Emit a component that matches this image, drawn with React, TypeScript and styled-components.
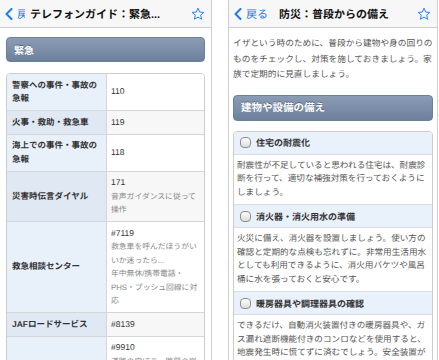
import {Fragment} from "react";
import styled, {createGlobalStyle} from "styled-components";

const GlobalStyle = createGlobalStyle`
  html, body {
    margin: 0;
    padding: 0;
    background: #ffffff;
  }

  body {
    font-family: "Liberation Sans", "Noto Sans CJK JP", sans-serif;
    color: #333333;
    text-rendering: geometricPrecision;
  }
`

const StyledPage = styled.div`
  display: flex;
  flex-direction: row;
  align-items: stretch;
  width: 439px;
  height: 360px;
  overflow: hidden;
  background: #ffffff;
`

const StyledScreen = styled.div<{ $left?: boolean }>`
  display: flex;
  flex-direction: column;
  flex-shrink: 0;
  width: ${props => props.$left ? "211px" : "208px"};
  margin-left: ${props => props.$left ? "0" : "16px"};
  border-right: 1px solid #cfcfcf;
  border-left: ${props => props.$left ? "none" : "1px solid #cfcfcf"};
  background: #ffffff;
  overflow: hidden;
`

const StyledNavBar = styled.div`
  display: flex;
  flex-direction: row;
  align-items: center;
  height: 27px;
  flex-shrink: 0;
  padding: 0 6px 0 5px;
  background: #f7f7f8;
  border-bottom: 1px solid #cdcdcd;

  svg {
    flex-shrink: 0;
  }
`

const StyledBack = styled.div<{ $clipped?: boolean }>`
  display: flex;
  align-items: center;
  gap: 4px;
  flex-shrink: 0;
  width: ${props => props.$clipped ? "20px" : "auto"};
  overflow: hidden;
  margin-right: ${props => props.$clipped ? "5px" : "11px"};
  color: #1a7cf4;
  font-size: 11px;
  white-space: nowrap;
`

const StyledTitle = styled.div`
  flex: 1;
  font-size: 11px;
  font-weight: bold;
  color: #111111;
  white-space: nowrap;
  overflow: hidden;
`

const StyledContent = styled.div`
  display: flex;
  flex-direction: column;
  padding: 9px 6px 0 6px;
`

const StyledSectionHeader = styled.div<{ $large?: boolean }>`
  display: flex;
  align-items: center;
  height: ${props => props.$large ? "24px" : "23px"};
  padding: 0 7px;
  border-radius: 4px;
  border: 1px solid #6c7f9b;
  background: linear-gradient(#8b9cb5, #6d809c);
  color: #ffffff;
  font-size: ${props => props.$large ? "10.5px" : "10px"};
  font-weight: bold;
  text-shadow: 0 -1px 0 rgba(40, 55, 80, 0.5);
`

const StyledTable = styled.div`
  display: grid;
  grid-template-columns: 100px 1fr;
  margin-top: 11px;
  border: 1px solid #cccccc;
  border-radius: 4px;
  overflow: hidden;
`

const StyledLabelCell = styled.div<{ $odd?: boolean; $first?: boolean }>`
  display: flex;
  align-items: center;
  padding: 4.5px 5px;
  font-size: 8.5px;
  line-height: 13.5px;
  font-weight: bold;
  color: #333333;
  background: ${props => props.$odd ? "#dfe8f3" : "#e8f0fa"};
  border-top: ${props => props.$first ? "none" : "1px solid #d6d6d6"};
  border-right: 1px solid #d6d6d6;
`

const StyledValueCell = styled.div<{ $odd?: boolean; $first?: boolean }>`
  display: flex;
  flex-direction: column;
  justify-content: center;
  padding: 4.5px 4px;
  font-size: 8.5px;
  line-height: 13.5px;
  color: #333333;
  background: ${props => props.$odd ? "#f7f7f7" : "#ffffff"};
  border-top: ${props => props.$first ? "none" : "1px solid #d6d6d6"};
`

const StyledNote = styled.div`
  font-size: 7.8px;
  color: #888888;
  white-space: nowrap;
`

const StyledIntro = styled.p`
  margin: 0;
  padding: 0;
  font-size: 8.7px;
  line-height: 15.5px;
  color: #555555;
  white-space: nowrap;
`

const StyledRightContent = styled.div`
  display: flex;
  flex-direction: column;
  padding: 8px 4px 0 4px;
  gap: 12px;
`

const StyledCard = styled.div`
  display: flex;
  flex-direction: column;
  border: 1px solid #cccccc;
  border-radius: 4px;
  overflow: hidden;
  margin-top: -2px;
`

const StyledCardHeader = styled.div<{ $first?: boolean }>`
  display: flex;
  align-items: center;
  gap: 5px;
  height: 22px;
  padding: 0 6px;
  background: #e9f1fb;
  border-top: ${props => props.$first ? "none" : "1px solid #d6dde6"};
  border-bottom: 1px solid #d6dde6;
  font-size: 9px;
  font-weight: bold;
  color: #333333;
`

const StyledCheck = styled.span`
  display: inline-block;
  width: 9px;
  height: 9px;
  border-radius: 4px;
  border: 1px solid #8d8d8d;
  background: linear-gradient(#ffffff, #dcdcdc);
  flex-shrink: 0;
`

const StyledCardBody = styled.div`
  padding: 4px 2px 5px 3px;
  font-size: 8.6px;
  line-height: 13.5px;
  color: #555555;
  white-space: nowrap;
`

const Chevron = () => (
    <svg width="8" height="12" viewBox="0 0 8 12">
        <polyline points="6.5,1 1.5,6 6.5,11" fill="none" stroke="#1a7cf4" strokeWidth="2"
                  strokeLinecap="round" strokeLinejoin="round"/>
    </svg>
)

const Star = () => (
    <svg width="14" height="14" viewBox="0 0 24 24">
        <polygon points="12,2 14.9,8.6 22,9.3 16.6,14 18.2,21 12,17.3 5.8,21 7.4,14 2,9.3 9.1,8.6"
                 fill="none" stroke="#1a7cf4" strokeWidth="1.6" strokeLinejoin="round"/>
    </svg>
)

type Row = {
    label: string[]
    value: string
    notes?: string[]
}

const rows: Row[] = [
    {label: ["警察への事件・事故の", "急報"], value: "110"},
    {label: ["火事・救助・救急車"], value: "119"},
    {label: ["海上での事件・事故の", "急報"], value: "118"},
    {label: ["災害時伝言ダイヤル"], value: "171", notes: ["音声ガイダンスに従って", "操作"]},
    {
        label: ["救急相談センター"], value: "#7119",
        notes: ["救急車を呼んだほうがい", "いか迷ったら...", "年中無休/携帯電話・", "PHS・プッシュ回線に対", "応"]
    },
    {label: ["JAFロードサービス"], value: "#8139"},
    {label: [""], value: "#9910", notes: ["道路の穴ぼこ、路肩の崩", "れ、落下物など"]},
]

type Tip = {
    title: string
    lines: string[]
}

const tips: Tip[] = [
    {
        title: "住宅の耐震化",
        lines: ["耐震性が不足していると思われる住宅は、耐震診", "断を行って、適切な補強対策を行っておくように", "しましょう。"]
    },
    {
        title: "消火器・消火用水の準備",
        lines: ["火災に備え、消火器を設置しましょう。使い方の", "確認と定期的な点検も忘れずに。非常用生活用水",
            "としても利用できるように、消火用バケツや風呂", "桶に水を張っておくと安心です。"]
    },
    {
        title: "暖房器具や調理器具の確認",
        lines: ["できるだけ、自動消火装置付きの暖房器具や、ガ", "ス漏れ遮断機能付きのコンロなどを使用すると、",
            "地震発生時に慌てずに済むでしょう。安全装置が", "正しく動作するか、設置条件や動作条件を確認し"]
    },
]

const App = () => {
    return (
        <StyledPage>
            <GlobalStyle/>

            <StyledScreen $left>
                <StyledNavBar>
                    <StyledBack $clipped>
                        <Chevron/>
                        <span>戻る</span>
                    </StyledBack>
                    <StyledTitle>テレフォンガイド：緊急...</StyledTitle>
                    <Star/>
                </StyledNavBar>

                <StyledContent>
                    <StyledSectionHeader>緊急</StyledSectionHeader>
                    <StyledTable>
                        {rows.map((row, i) => (
                            <Fragment key={i}>
                                <StyledLabelCell $odd={i % 2 === 1} $first={i === 0}>
                                    <div>
                                        {row.label.map((line, j) => (
                                            <div key={j}>{line}</div>
                                        ))}
                                    </div>
                                </StyledLabelCell>
                                <StyledValueCell $odd={i % 2 === 1} $first={i === 0}>
                                    <div>{row.value}</div>
                                    {row.notes?.map((note, j) => (
                                        <StyledNote key={j}>{note}</StyledNote>
                                    ))}
                                </StyledValueCell>
                            </Fragment>
                        ))}
                    </StyledTable>
                </StyledContent>
            </StyledScreen>

            <StyledScreen>
                <StyledNavBar>
                    <StyledBack>
                        <Chevron/>
                        <span>戻る</span>
                    </StyledBack>
                    <StyledTitle>防災：普段からの備え</StyledTitle>
                    <Star/>
                </StyledNavBar>

                <StyledRightContent>
                    <StyledIntro>
                        イザという時のために、普段から建物や身の回りの<br/>
                        ものをチェックし、対策を施しておきましょう。家<br/>
                        族で定期的に見直しましょう。
                    </StyledIntro>
                    <StyledSectionHeader $large>建物や設備の備え</StyledSectionHeader>
                    <StyledCard>
                        {tips.map((tip, i) => (
                            <div key={i}>
                                <StyledCardHeader $first={i === 0}>
                                    <StyledCheck/>
                                    {tip.title}
                                </StyledCardHeader>
                                <StyledCardBody>
                                    {tip.lines.map((line, j) => (
                                        <div key={j}>{line}</div>
                                    ))}
                                </StyledCardBody>
                            </div>
                        ))}
                    </StyledCard>
                </StyledRightContent>
            </StyledScreen>
        </StyledPage>
    )
}
export default App;
